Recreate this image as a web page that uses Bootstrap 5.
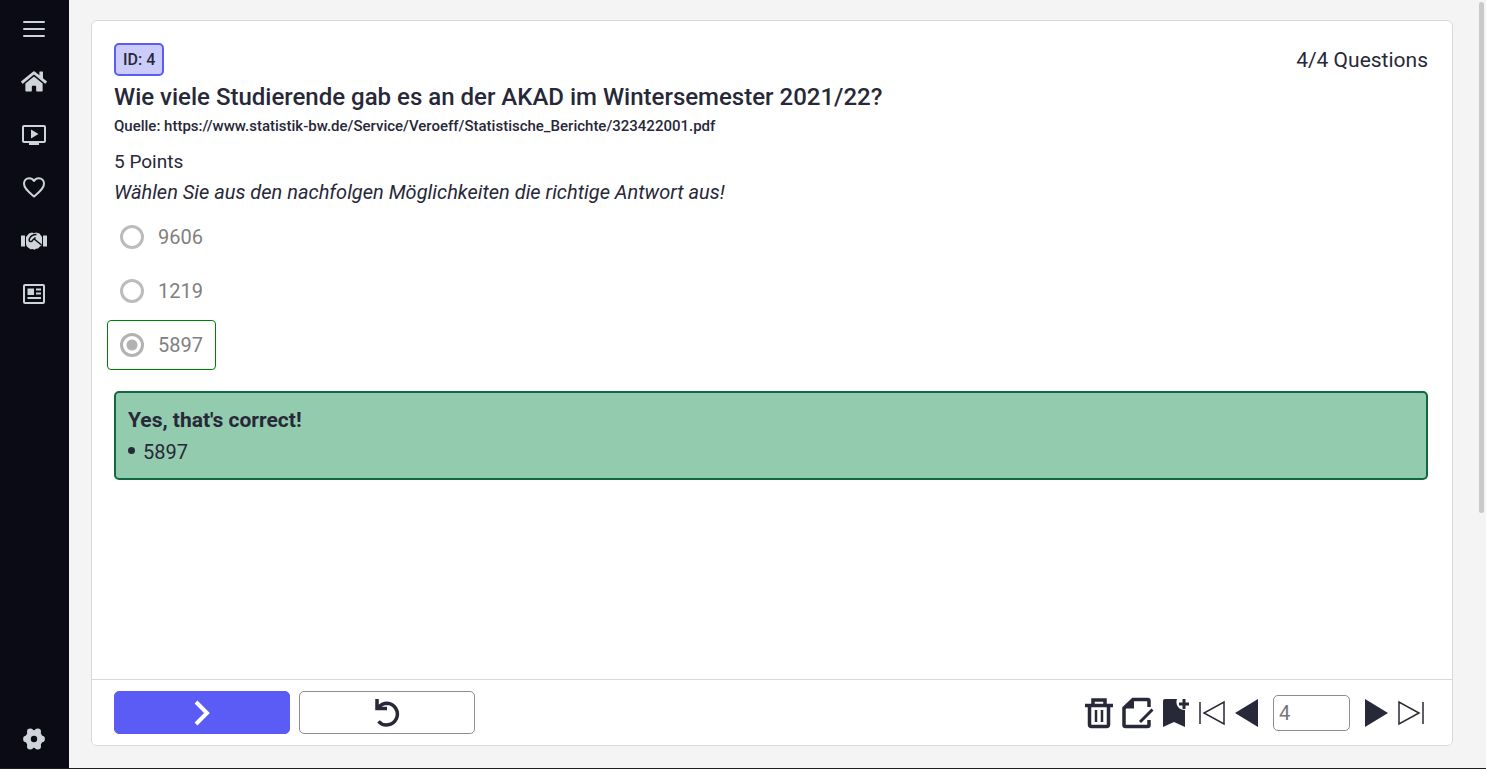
<!DOCTYPE html>
<html lang="de">
<head>
<meta charset="utf-8">
<meta name="viewport" content="width=device-width, initial-scale=1">
<title>Quiz</title>
<link href="https://cdn.jsdelivr.net/npm/bootstrap@5.3.0/dist/css/bootstrap.min.css" rel="stylesheet">
<style>
  :root { --ink: #272838; --accent: #5b5bf5; --line: #d9d9d9; }
  body { font-family: Roboto, "Liberation Sans", sans-serif; font-size: 20px; line-height: 30px; color: var(--ink); background: #f4f4f4; }
  .app-shell { border-bottom: 1px solid #1d1d20; }
  .side-nav { width: 69px; background: #0b0b15; padding: 2px 2px 3px 0; }
  .side-nav a { height: 53px; color: #ced4da; }
  .quiz-main { padding: 20px 33px 22px 22px; }
  .quiz-card { border: 1px solid var(--line); border-radius: 6px; }
  .quiz-card .card-body { padding: 22px 24px 22px 22px; }
  .quiz-card .card-footer { border-color: var(--line); padding: 11px 27px 11px 22px; }
  .id-tag { border: 2px solid var(--accent); border-radius: 5px; background: #ccccfb; font-size: 16px; line-height: 29px; padding: 0 7px; }
  .counter { font-size: 21px; }
  .question { font-size: 24px; line-height: 30px; margin: 6px 0 0; }
  .source { font-size: 15px; line-height: 28px; }
  .points { font-size: 19px; padding-top: 7px; }
  .prompt { font-size: 20px; line-height: 30px; margin-bottom: 5px; }
  .answer { border: 1px solid transparent; border-radius: 4px; height: 50px; padding: 0 12px; margin: 0 0 4px -7px; gap: 14px; color: #808080; }
  .answer.right { border-color: #008000; }
  .answer input { appearance: none; width: 24px; height: 24px; margin: 0; border: 3px solid #bcbcbc; border-radius: 50%; }
  .answer input:checked { border-color: #b2b2b2; background: radial-gradient(circle, #b2b2b2 5px, transparent 6px); }
  .feedback { border: 2px solid #13693f; border-radius: 5px; background: #93cbae; padding: 12px 12px 11px; margin-top: 17px; }
  .feedback strong { font-size: 21px; }
  .feedback ul { list-style: none; padding: 0; margin: 2px 0 0; }
  .feedback li { gap: 8px; }
  .feedback li::before { content: ""; width: 7px; height: 7px; margin-bottom: 3px; border-radius: 50%; background: var(--ink); }
  .actions, .tools { gap: 9px; }
  .action { width: 176px; height: 43px; border-radius: 5px; border: 1px solid #8c8c92; padding: 0; }
  .action.next { background: var(--accent); border-color: var(--accent); }
  .tool { border: 0; background: none; padding: 0; color: var(--ink); }
  .page-no { width: 77px; height: 36px; border: 1px solid #8c8c92; border-radius: 5px; padding: 0 5px; color: #757575; line-height: 30px; margin: 0 5px; }
  .scroll-thumb { position: fixed; top: 2px; right: 2px; width: 5px; height: 66.4vh; border-radius: 3px; background: #c9c9c9; }
  svg { display: block; }
</style>
</head>
<body>
<div class="app-shell d-flex vh-100">
  <nav class="side-nav d-flex flex-column flex-shrink-0" aria-label="Main">
    <a href="#" class="d-flex align-items-center justify-content-center" aria-label="Menu"><svg width="22" height="16" viewBox="0 0 22 16" fill="none" stroke="currentColor" stroke-width="2" stroke-linecap="round"><path d="M1 1h20M1 8h20M1 15h20"/></svg></a>
    <a href="#" class="d-flex align-items-center justify-content-center" aria-label="Home"><svg width="26" height="23" viewBox="0 0 576 512" fill="currentColor"><path d="M280.37 148.26L96 300.11V464a16 16 0 0 0 16 16l112.06-.29a16 16 0 0 0 15.92-16V368a16 16 0 0 1 16-16h64a16 16 0 0 1 16 16v95.64a16 16 0 0 0 16 16.05L464 480a16 16 0 0 0 16-16V300L295.67 148.26a12.19 12.19 0 0 0-15.3 0zM571.6 251.47L488 182.56V44.05a12 12 0 0 0-12-12h-56a12 12 0 0 0-12 12v72.61L318.47 43a48 48 0 0 0-61 0L4.34 251.47a12 12 0 0 0-1.6 16.9l25.5 31A12 12 0 0 0 45.15 301l235.22-193.74a12.19 12.19 0 0 1 15.3 0L530.9 301a12 12 0 0 0 16.9-1.6l25.5-31a12 12 0 0 0-1.7-16.93z"/></svg></a>
    <a href="#" class="d-flex align-items-center justify-content-center" aria-label="Videos"><svg width="24" height="20" viewBox="0 0 24 20" fill="currentColor"><path fill-rule="evenodd" d="M2 0h20a2 2 0 0 1 2 2v14a2 2 0 0 1-2 2h-5v2H7v-2H2a2 2 0 0 1-2-2V2a2 2 0 0 1 2-2zm0 2v14h20V2zM9 4.500l7.500 4.500L9 13.500z"/></svg></a>
    <a href="#" class="d-flex align-items-center justify-content-center" aria-label="Favourites"><svg width="22" height="21" viewBox="0 0 22 21" fill="none" stroke="currentColor" stroke-width="2" stroke-linejoin="round"><path d="M11 19.500C6 15.200 1 11.500 1 6.700 1 3.500 3.300 1.200 6.200 1.200 8.200 1.200 10 2.300 11 4c1-1.700 2.800-2.800 4.800-2.800C18.700 1.200 21 3.500 21 6.700c0 4.800-5 8.500-10 12.800z"/></svg></a>
    <a href="#" class="d-flex align-items-center justify-content-center" aria-label="Community"><svg width="26" height="18" viewBox="0 0 26 18"><path fill="currentColor" d="M0 3.500h4v11H0zM22 3.500h4v11h-4zM5 5l3-3.500L11 .5l2 .8 2-.8 3.500 1L21 5v8l-2 1.500-2 2-2 .3-1.500 1-2-.8-2 .2L7 15.500 5.500 14 5 12z"/><path fill="none" stroke="#0b0b15" stroke-width="1.500" stroke-linejoin="round" d="M15.500 2.500C12 2.500 9.500 4 8.300 7q-.5 2.200 1 2.500 1.500.2 2.300-1.200L14.500 5.500M13.200 7l7.300 6"/></svg></a>
    <a href="#" class="d-flex align-items-center justify-content-center" aria-label="News"><svg width="22" height="20" viewBox="0 0 22 20" fill="currentColor"><path fill-rule="evenodd" d="M2 0h18a2 2 0 0 1 2 2v16a2 2 0 0 1-2 2H2a2 2 0 0 1-2-2V2a2 2 0 0 1 2-2zm0 2v16h18V2zM4.500 4.500H11V11H4.500zM13 4.500h5v2h-5zM13 8.500h5v2h-5zM4.500 13h13.500v2H4.500z"/></svg></a>
    <a href="#" class="d-flex align-items-center justify-content-center mt-auto" aria-label="Settings"><svg width="22" height="22" viewBox="0 0 22 22" fill="currentColor"><circle cx="11" cy="11" r="8.900"/><circle cx="3.300" cy="11" r="3.200"/><circle cx="18.700" cy="11" r="3.200"/><circle cx="7.200" cy="3.800" r="3.200"/><circle cx="14.800" cy="3.800" r="3.200"/><circle cx="7.200" cy="18.200" r="3.200"/><circle cx="14.800" cy="18.200" r="3.200"/><circle cx="11" cy="11" r="3.200" fill="#0b0b15"/></svg></a>
  </nav>

  <main class="quiz-main flex-grow-1 d-flex">
    <section class="quiz-card card flex-grow-1">
      <div class="card-body">
        <div class="d-flex justify-content-between align-items-center">
          <span class="id-tag fw-medium">ID: 4</span>
          <span class="counter">4/4 Questions</span>
        </div>
        <h1 class="question fw-medium">Wie viele Studierende gab es an der AKAD im Wintersemester 2021/22?</h1>
        <div class="source fw-medium">Quelle: https://www.statistik-bw.de/Service/Veroeff/Statistische_Berichte/323422001.pdf</div>
        <div class="points">5 Points</div>
        <form>
          <fieldset>
            <legend class="fst-italic prompt">Wählen Sie aus den nachfolgen Möglichkeiten die richtige Antwort aus!</legend>
            <div class="d-flex flex-column align-items-start">
              <label class="answer d-flex align-items-center"><input type="radio" name="answer" disabled>9606</label>
              <label class="answer d-flex align-items-center"><input type="radio" name="answer" disabled>1219</label>
              <label class="answer right d-flex align-items-center"><input type="radio" name="answer" checked disabled>5897</label>
            </div>
          </fieldset>
        </form>
        <div class="feedback" role="status">
          <strong class="d-block">Yes, that's correct!</strong>
          <ul><li class="d-flex align-items-center">5897</li></ul>
        </div>
      </div>
      <footer class="card-footer bg-white d-flex justify-content-between align-items-center">
        <div class="actions d-flex">
          <button type="button" class="action next d-flex align-items-center justify-content-center" aria-label="Next"><svg width="16" height="26" viewBox="0 0 16 26" fill="none" stroke="#fff" stroke-width="4"><path d="M2 2l11 11L2 24"/></svg></button>
          <button type="button" class="action bg-white d-flex align-items-center justify-content-center" aria-label="Retry"><svg width="26" height="28" viewBox="0 0 26 28" fill="none" stroke="#272838" stroke-width="3.500"><path d="M3 0v9.500h10M3.500 9C7 5.500 9 4.300 13 4.300a10.800 10.800 0 1 1-8.500 18"/></svg></button>
        </div>
        <div class="tools d-flex align-items-center">
          <button type="button" class="tool" aria-label="Delete"><svg width="28" height="32" viewBox="0 0 28 32" fill="none" stroke="currentColor" stroke-width="3.500"><path d="M0 8.500h28M8 8V3h12V8M4.500 8v19.500q0 2 2 2h15q2 0 2-2V8"/><path stroke-width="2.500" d="M11 13v12M17 13v12"/></svg></button>
          <button type="button" class="tool" aria-label="Edit"><svg width="32" height="32" viewBox="0 0 32 32" fill="none" stroke="currentColor" stroke-width="3.500"><path d="M27 10V4q0-1.500-1.500-1.500H11L2 11v17q0 1.500 1.500 1.500h22q1.500 0 1.500-1.500v-5"/><path stroke-width="3" d="M18 25L30.500 12.500"/><path fill="currentColor" stroke="none" d="M12 1v10.500H1z"/></svg></button>
          <button type="button" class="tool" aria-label="Add bookmark"><svg width="26" height="30" viewBox="0 0 26 30"><path fill="currentColor" d="M2 1h12a8 8 0 0 0 8 11v17l-11-5-11 5V3q0-2 2-2z"/><path fill="none" stroke="currentColor" stroke-width="3" d="M21 1v10M16 6h10"/></svg></button>
          <button type="button" class="tool" aria-label="First"><svg width="28" height="26" viewBox="0 0 28 26" fill="none" stroke="currentColor" stroke-width="1.500"><path d="M2 2v22M26 2v22L6 13z"/></svg></button>
          <button type="button" class="tool" aria-label="Previous"><svg width="24" height="28" viewBox="0 0 24 28"><path fill="currentColor" d="M23 0v28L0 14z"/></svg></button>
          <input class="page-no" type="text" value="4" aria-label="Question number">
          <button type="button" class="tool" aria-label="Following"><svg width="24" height="28" viewBox="0 0 24 28"><path fill="currentColor" d="M1 0v28l23-14z"/></svg></button>
          <button type="button" class="tool" aria-label="Last"><svg width="28" height="26" viewBox="0 0 28 26" fill="none" stroke="currentColor" stroke-width="1.500"><path d="M26 2v22M2 2v22l20-11z"/></svg></button>
        </div>
      </footer>
    </section>
  </main>
</div>
<div class="scroll-thumb" aria-hidden="true"></div>
<script src="https://cdn.jsdelivr.net/npm/bootstrap@5.3.0/dist/js/bootstrap.bundle.min.js"></script>
</body>
</html>
